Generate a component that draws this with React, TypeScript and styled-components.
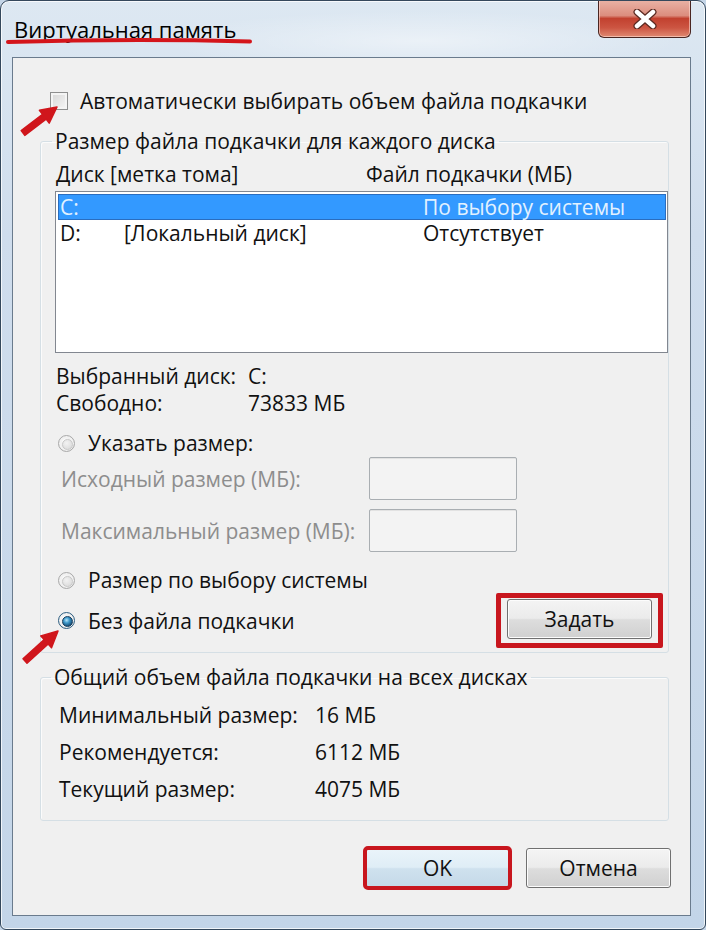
import React from 'react';
import styled, { createGlobalStyle, css } from 'styled-components';

const GlobalStyle = createGlobalStyle`
  html, body {
    margin: 0;
    padding: 0;
  }
  body {
    width: 706px;
    height: 930px;
    overflow: hidden;
    font-family: 'Open Sans', 'Noto Sans', 'DejaVu Sans', sans-serif;
    font-size: 21px;
    color: #111;
    background: #c4d5e7;
  }
  * {
    box-sizing: border-box;
  }
`;

const Window = styled.div`
  position: relative;
  width: 706px;
  height: 930px;
  display: flex;
  flex-direction: column;
  border: 1px solid #34485c;
  border-radius: 9px 9px 6px 6px;
  background:
    radial-gradient(ellipse 260px 30px at 420px 40px, rgba(255, 255, 255, 0.45), transparent),
    linear-gradient(180deg, #dde8f2 0%, #cfdded 25%, #c3d5e8 100%);
  box-shadow: inset 0 0 0 1px rgba(255, 255, 255, 0.75);
  overflow: hidden;
`;

const TitleBar = styled.div`
  height: 56px;
  flex: none;
  display: flex;
  justify-content: space-between;
  align-items: flex-start;
  padding-left: 13px;
`;

const Title = styled.div`
  font-size: 22px;
  line-height: 26px;
  margin-top: 15px;
  color: #000;
`;

const CloseButton = styled.div`
  width: 93px;
  height: 38px;
  margin: -1px 14px 0 0;
  display: flex;
  align-items: center;
  justify-content: center;
  border: 1px solid #4a2622;
  border-top: none;
  border-radius: 0 0 6px 6px;
  background: linear-gradient(
    180deg,
    #e9b3a6 0%,
    #dc8d7e 42%,
    #c2412f 50%,
    #cc5542 75%,
    #e08a72 100%
  );
  box-shadow: inset 0 0 0 1px rgba(255, 220, 210, 0.6);
`;

const Client = styled.div`
  flex: 1;
  margin: 0 14px 13px 11px;
  border: 1px solid #6a7b8d;
  background: #f0f0f0;
  padding: 32px 21px 0 27px;
  display: flex;
  flex-direction: column;
`;

const CheckRow = styled.label`
  display: flex;
  align-items: center;
  gap: 12px;
  height: 22px;
  padding-left: 10px;
  line-height: 22px;
`;

const CheckBox = styled.span`
  width: 18px;
  height: 18px;
  flex: none;
  border: 1px solid #8e8f8f;
  background: linear-gradient(135deg, #d6d6d6 0%, #f6f6f6 100%);
  box-shadow: inset 0 0 0 2px #f4f4f4;
`;

const Group = styled.fieldset<{ $gap: number }>`
  margin: ${(p) => p.$gap}px 0 0 0;
  padding: 0 0 ${(p) => (p.$gap > 15 ? 4 : 13)}px 14px;
  min-width: 0;
  border: 1px solid #d5dfe5;
  border-radius: 3px;
  box-shadow: inset 1px 1px 0 #fbfbfb;
`;

const Legend = styled.legend<{ $shift: number }>`
  padding: 0 3px;
  margin-left: ${(p) => p.$shift}px;
  line-height: 22px;
  font-size: 21px;
`;

const HeaderRow = styled.div`
  display: grid;
  grid-template-columns: 310px 1fr;
  margin-top: 11px;
  padding-left: 1px;
  line-height: 22px;
`;

const ListBox = styled.div`
  margin-top: 6px;
  height: 162px;
  background: #fff;
  border: 1px solid #828790;
  padding: 2px 1px 0 2px;
`;

const ListRow = styled.div<{ $selected?: boolean }>`
  display: grid;
  grid-template-columns: 64px 299px 1fr;
  align-items: center;
  height: 26px;
  padding-left: 2px;
  line-height: 22px;
  ${(p) =>
    p.$selected &&
    css`
      background: #3399ff;
      color: #e2f1ff;
      box-shadow: inset 0 0 0 1px #2a6dbf;
    `}
`;

const InfoGrid = styled.div`
  display: grid;
  grid-template-columns: 192px 1fr;
  grid-auto-rows: 27px;
  align-items: center;
  margin-top: 9px;
  padding-left: 1px;
  line-height: 22px;
`;

const RadioRow = styled.label<{ $top: number }>`
  display: flex;
  align-items: center;
  gap: 13px;
  height: 28px;
  margin-top: ${(p) => p.$top}px;
  padding-left: 3px;
  line-height: 22px;
`;

const Radio = styled.span<{ $checked?: boolean }>`
  position: relative;
  width: 17px;
  height: 17px;
  flex: none;
  border-radius: 50%;
  border: 1px solid ${(p) => (p.$checked ? '#2c5d80' : '#a9a9a9')};
  background: radial-gradient(circle at 40% 35%, #ffffff 0%, #e4e4e4 60%, #cfcfcf 100%);
  box-shadow: inset 0 0 0 2px #f1f1f1;

  &::after {
    content: '';
    position: absolute;
    left: 3px;
    top: 3px;
    width: 9px;
    height: 9px;
    border-radius: 50%;
    background: ${(p) =>
      p.$checked
        ? 'radial-gradient(circle at 40% 35%, #b7e6fb 0%, #3f9acb 35%, #17507a 75%, #0c2f4a 100%)'
        : 'radial-gradient(circle at 40% 35%, #f2f2f2 0%, #d7d7d7 100%)'};
    border: 1px solid ${(p) => (p.$checked ? '#163d5c' : '#c8c8c8')};
  }
`;

const SizeRow = styled.div<{ $top: number }>`
  display: grid;
  grid-template-columns: 308px 148px;
  align-items: center;
  margin-top: ${(p) => p.$top}px;
  padding-left: 6px;
  color: #8d8d8d;
  line-height: 22px;
`;

const InputBox = styled.div`
  width: 148px;
  height: 43px;
  border: 1px solid #a9aeb2;
  border-radius: 2px;
  background: #f3f3f3;
  box-shadow: inset 0 1px 0 #e2e2e2;
`;

const BottomRow = styled.div`
  display: flex;
  justify-content: space-between;
  align-items: center;
  margin-top: -1px;
  padding-right: 5px;
`;

const Marker = styled.span`
  display: inline-flex;
  border: 5px solid #c8161e;
  border-radius: 2px;
  padding: 1px 6px 4px;
`;

const Button = styled.button<{ $primary?: boolean; $marked?: boolean }>`
  width: 145px;
  height: 40px;
  padding: 0;
  font-family: inherit;
  font-size: 21px;
  font-weight: 400;
  color: #111;
  border: 1px solid #707070;
  border-radius: 3px;
  background: ${(p) =>
    p.$primary
      ? 'linear-gradient(180deg, #eaf4fa 0%, #dfedf6 48%, #cfe1ee 52%, #c4d9e8 100%)'
      : 'linear-gradient(180deg, #f4f4f4 0%, #ebebeb 48%, #dddddd 52%, #d0d0d0 100%)'};
  box-shadow: inset 0 0 0 1px #fcfcfc;
  ${(p) =>
    p.$marked &&
    css`
      outline: 4px solid #c8161e;
      outline-offset: -2px;
    `}
`;

const StatsGrid = styled.div`
  display: grid;
  grid-template-columns: 256px 1fr;
  grid-auto-rows: 37px;
  align-items: center;
  margin-top: 8px;
  padding-left: 4px;
  line-height: 22px;
`;

const Footer = styled.div`
  display: flex;
  justify-content: flex-end;
  gap: 16px;
  margin: 27px -2px 0 0;
`;

const Annotations = styled.svg`
  position: absolute;
  left: -1px;
  top: -1px;
  pointer-events: none;
`;

const CloseGlyph = () => (
  <svg width="24" height="20" viewBox="0 0 24 20">
    <path d="M4 3 L20 17 M20 3 L4 17" stroke="#5b2a22" strokeWidth="7" strokeLinecap="round" />
    <path d="M4 3 L20 17 M20 3 L4 17" stroke="#ffffff" strokeWidth="4.5" strokeLinecap="round" />
  </svg>
);

const App = () => (
  <>
    <GlobalStyle />
    <Window>
      <TitleBar>
        <Title>Виртуальная память</Title>
        <CloseButton>
          <CloseGlyph />
        </CloseButton>
      </TitleBar>
      <Client>
        <CheckRow>
          <CheckBox />
          Автоматически выбирать объем файла подкачки
        </CheckRow>

        <Group $gap={18}>
          <Legend $shift={-3}>Размер файла подкачки для каждого диска</Legend>
          <HeaderRow>
            <span>Диск [метка тома]</span>
            <span>Файл подкачки (МБ)</span>
          </HeaderRow>
          <ListBox>
            <ListRow $selected>
              <span>C:</span>
              <span />
              <span>По выбору системы</span>
            </ListRow>
            <ListRow>
              <span>D:</span>
              <span>[Локальный диск]</span>
              <span>Отсутствует</span>
            </ListRow>
          </ListBox>
          <InfoGrid>
            <span>Выбранный диск:</span>
            <span>C:</span>
            <span>Свободно:</span>
            <span>73833 МБ</span>
          </InfoGrid>
          <RadioRow $top={13}>
            <Radio />
            Указать размер:
          </RadioRow>
          <SizeRow $top={0}>
            <span>Исходный размер (МБ):</span>
            <InputBox />
          </SizeRow>
          <SizeRow $top={9}>
            <span>Максимальный размер (МБ):</span>
            <InputBox />
          </SizeRow>
          <RadioRow $top={14}>
            <Radio />
            Размер по выбору системы
          </RadioRow>
          <BottomRow>
            <RadioRow $top={0}>
              <Radio $checked />
              Без файла подкачки
            </RadioRow>
            <Marker>
              <Button>Задать</Button>
            </Marker>
          </BottomRow>
        </Group>

        <Group $gap={13}>
          <Legend $shift={-4}>Общий объем файла подкачки на всех дисках</Legend>
          <StatsGrid>
            <span>Минимальный размер:</span>
            <span>16 МБ</span>
            <span>Рекомендуется:</span>
            <span>6112 МБ</span>
            <span>Текущий размер:</span>
            <span>4075 МБ</span>
          </StatsGrid>
        </Group>

        <Footer>
          <Button $primary $marked>
            OK
          </Button>
          <Button>Отмена</Button>
        </Footer>
      </Client>

      <Annotations width="706" height="930" viewBox="0 0 706 930">
        <path d="M8 42 Q 130 38.5 250 41.5" stroke="#d4151b" strokeWidth="4" strokeLinecap="round" fill="none" />
        <path
          d="M21.2 130.6 L42.5 114.3 L39.4 110.3 L57 107 L49.2 123.1 L46.1 119.1 L24.8 135.4 Z"
          fill="#d0161c"
          stroke="#d0161c"
          strokeWidth="1.5"
          strokeLinejoin="round"
        />
        <path
          d="M23 658.8 L44.2 639.6 L40.8 635.9 L58 631 L51.5 647.7 L48.2 644 L27 663.2 Z"
          fill="#d0161c"
          stroke="#d0161c"
          strokeWidth="1.5"
          strokeLinejoin="round"
        />
      </Annotations>
    </Window>
  </>
);

export default App;
